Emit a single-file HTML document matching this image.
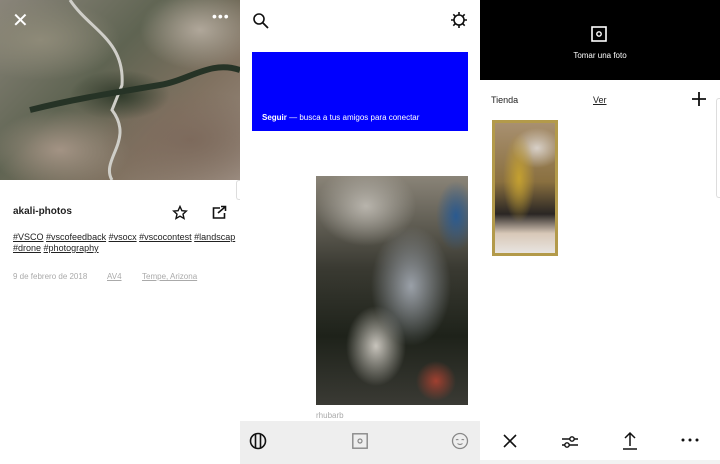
<!DOCTYPE html>
<html><head><meta charset="utf-8"><style>
*{margin:0;padding:0;box-sizing:border-box}
body{width:720px;height:464px;overflow:hidden;background:#fff;font-family:"Liberation Sans",sans-serif;position:relative}
.a{position:absolute}
u{text-decoration:underline}
</style></head><body>
<!-- left panel -->
<div class="a" style="left:0;top:0;width:240px;height:180px;background:
radial-gradient(ellipse 50px 25px at 120px 95px,#2f3a2a,transparent),
radial-gradient(ellipse 80px 40px at 40px 40px,#8e8a78,transparent),
radial-gradient(ellipse 60px 40px at 200px 30px,#b0a79a,transparent),
radial-gradient(ellipse 90px 50px at 190px 140px,#7d6a5c,transparent),
radial-gradient(ellipse 70px 40px at 60px 150px,#a39384,transparent),
linear-gradient(135deg,#8a857a,#5f6452 40%,#817261 70%,#9b8c80);"></div>
<svg class="a" style="left:0;top:0" width="240" height="180"><path d="M70 0 C90 30 125 40 122 85 L112 110 C135 140 100 160 112 180" stroke="#cfcec8" stroke-width="3" fill="none"/><path d="M30 110 C70 100 100 95 160 85 C190 80 210 60 240 70" stroke="#263326" stroke-width="6" fill="none"/></svg>
<div class="a" style="left:12px;top:8px;color:#fff;font-size:20px">✕</div>
<div class="a" style="left:212px;top:8px;color:#fff;font-size:14px;letter-spacing:1px">•••</div>
<div class="a" style="left:13px;top:206px;font-size:10px;font-weight:bold;color:#222">akali-photos</div>
<svg class="a" style="left:172px;top:205px" width="16" height="16" viewBox="0 0 16 16"><path d="M8 1.5l1.9 4.2 4.4.4-3.3 3 1 4.4L8 11.2 4 13.5l1-4.4-3.3-3 4.4-.4z" fill="none" stroke="#111" stroke-width="1.4"/></svg>
<svg class="a" style="left:212px;top:205px" width="15" height="15" viewBox="0 0 15 15"><path d="M8 3H1.5v10h11V8" fill="none" stroke="#111" stroke-width="1.6"/><path d="M6 8L13 2M9 1.5h4.5V6" fill="none" stroke="#111" stroke-width="1.6"/></svg>
<div class="a" style="left:13px;top:232px;font-size:9px;color:#222;line-height:11px;width:225px"><u>#VSCO</u> <u>#vscofeedback</u> <u>#vsocx</u> <u>#vscocontest</u> <u>#landscap</u><br><u>#drone</u> <u>#photography</u></div>
<div class="a" style="left:13px;top:272px;font-size:8px;color:#aaa">9 de febrero de 2018</div>
<div class="a" style="left:107px;top:272px;font-size:8px;color:#aaa"><u>AV4</u></div>
<div class="a" style="left:142px;top:272px;font-size:8px;color:#aaa"><u>Tempe, Arizona</u></div>
<div class="a" style="left:236px;top:180px;width:4px;height:20px;border:1px solid #ddd;border-right:none;border-radius:3px 0 0 3px"></div>
<!-- middle panel -->
<svg class="a" style="left:252px;top:12px" width="18" height="18" viewBox="0 0 18 18"><circle cx="7" cy="7" r="5" fill="none" stroke="#111" stroke-width="1.6"/><path d="M11 11l5 5" stroke="#111" stroke-width="1.8"/></svg>
<svg class="a" style="left:450px;top:11px" width="18" height="18" viewBox="0 0 18 18"><circle cx="9" cy="9" r="5" fill="none" stroke="#111" stroke-width="1.6"/><path d="M9 1v3M9 14v3M1 9h3M14 9h3M3.3 3.3l2.1 2.1M12.6 12.6l2.1 2.1M3.3 14.7l2.1-2.1M12.6 5.4l2.1-2.1" stroke="#111" stroke-width="1.6"/></svg>
<div class="a" style="left:252px;top:52px;width:216px;height:79px;background:#0000ff"></div>
<div class="a" style="left:262px;top:113px;font-size:8px;color:#fff"><b>Seguir</b> — busca a tus amigos para conectar</div>
<div class="a" style="left:316px;top:176px;width:152px;height:229px;background:
radial-gradient(ellipse 40px 60px at 95px 110px,#9aa0a8,transparent),
radial-gradient(ellipse 20px 35px at 140px 40px,#2a5a90,transparent),
radial-gradient(ellipse 50px 40px at 50px 30px,#b8b4ac,transparent),
radial-gradient(ellipse 30px 40px at 60px 170px,#c8c4bc,transparent),
radial-gradient(ellipse 20px 20px at 120px 205px,#a04030,transparent),
linear-gradient(180deg,#8a8478,#3a3a32 40%,#1e221a 70%,#3a3a34);"></div>
<div class="a" style="left:316px;top:411px;font-size:8px;color:#aaa">rhubarb</div>
<div class="a" style="left:240px;top:421px;width:240px;height:43px;background:#eeeeee"></div>
<svg class="a" style="left:249px;top:432px" width="18" height="18" viewBox="0 0 18 18"><circle cx="9" cy="9" r="7.5" fill="none" stroke="#111" stroke-width="1.6"/><path d="M6.5 2v14M11.5 2v14" stroke="#111" stroke-width="1.6"/></svg>
<svg class="a" style="left:352px;top:433px" width="16" height="16" viewBox="0 0 16 16"><rect x="0.8" y="0.8" width="14.4" height="14.4" fill="none" stroke="#888" stroke-width="1.4"/><circle cx="8" cy="8" r="2" fill="none" stroke="#888" stroke-width="1.2"/></svg>
<svg class="a" style="left:451px;top:432px" width="18" height="18" viewBox="0 0 18 18"><circle cx="9" cy="9" r="7.5" fill="none" stroke="#888" stroke-width="1.3"/><path d="M5 8q1.2-1.2 2.4 0M10.6 8q1.2-1.2 2.4 0M6.5 11.5q2.5 2 5 0" fill="none" stroke="#888" stroke-width="1.1"/></svg>
<!-- right panel -->
<div class="a" style="left:480px;top:0;width:240px;height:80px;background:#000"></div>
<svg class="a" style="left:591px;top:26px" width="18" height="17" viewBox="0 0 18 17"><rect x="1" y="1" width="14" height="14" fill="none" stroke="#fff" stroke-width="1.6"/><circle cx="8" cy="8" r="2.2" fill="none" stroke="#fff" stroke-width="1.4"/></svg>
<div class="a" style="left:480px;top:51px;width:240px;text-align:center;font-size:8px;color:#fff">Tomar una foto</div>
<div class="a" style="left:491px;top:95px;font-size:9px;color:#222">Tienda</div>
<div class="a" style="left:593px;top:95px;font-size:9px;color:#222"><u>Ver</u></div>
<svg class="a" style="left:692px;top:92px" width="14" height="14"><path d="M7 0v14M0 7h14" stroke="#111" stroke-width="1.8"/></svg>
<div class="a" style="left:716px;top:98px;width:6px;height:100px;border:1px solid #ddd;border-right:none;border-radius:3px 0 0 3px"></div>
<div class="a" style="left:492px;top:120px;width:66px;height:136px;border:3px solid #b39a4a;background:
radial-gradient(ellipse 16px 45px at 24px 55px,#c4a030,transparent),
radial-gradient(ellipse 25px 20px at 42px 25px,#d8d0c8,transparent),
linear-gradient(180deg,#a89070 0%,#8a7040 45%,#2a2624 70%,#d8c8b8 85%,#e8e4e0 100%);"></div>
<svg class="a" style="left:502px;top:433px" width="16" height="16"><path d="M2 2l12 12M14 2L2 14" stroke="#111" stroke-width="1.6"/></svg>
<svg class="a" style="left:561px;top:434px" width="18" height="16"><path d="M1 5h16M1 11h16" stroke="#111" stroke-width="1.5"/><circle cx="11" cy="5" r="2.2" fill="#fff" stroke="#111" stroke-width="1.4"/><circle cx="6" cy="11" r="2.2" fill="#fff" stroke="#111" stroke-width="1.4"/></svg>
<svg class="a" style="left:622px;top:431px" width="16" height="20"><path d="M8 15V2M3 7l5-5 5 5M1 18h14" fill="none" stroke="#111" stroke-width="1.5"/></svg>
<svg class="a" style="left:681px;top:438px" width="18" height="4"><circle cx="2" cy="2" r="1.5" fill="#111"/><circle cx="9" cy="2" r="1.5" fill="#111"/><circle cx="16" cy="2" r="1.5" fill="#111"/></svg>
<div class="a" style="left:480px;top:460px;width:240px;height:4px;background:#f2f2f2"></div>
</body></html>
